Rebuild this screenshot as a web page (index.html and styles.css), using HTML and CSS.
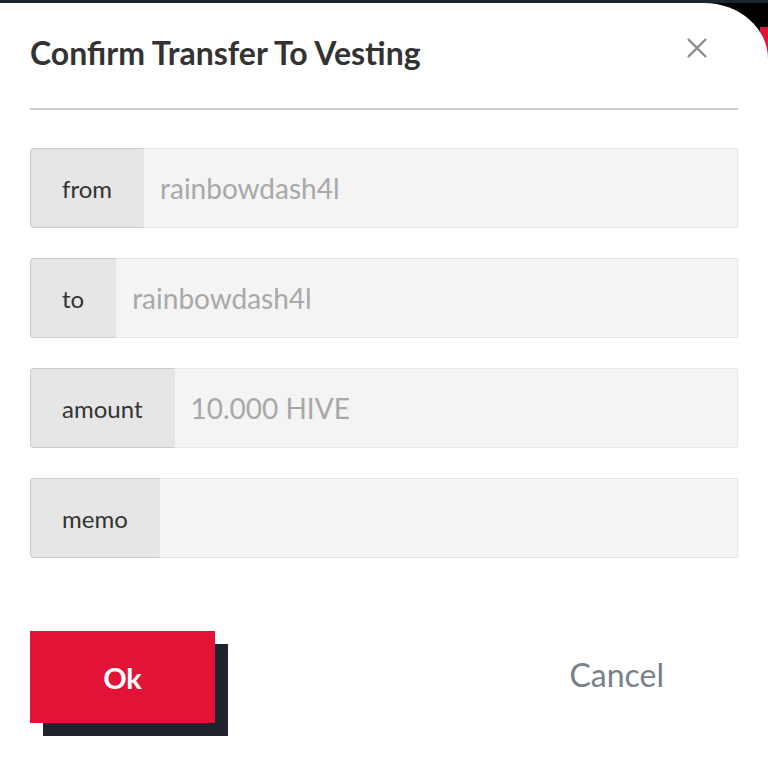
FILE: index.html
```html
<!DOCTYPE html>
<html>
<head>
<meta charset="utf-8">
<link rel="stylesheet" href="styles.css">
</head>
<body>
<div class="backdrop">
  <div class="corner-bg"><span class="red-sliver"></span></div>
  <div class="dialog">
    <div class="header">
      <h1 class="title">Confirm Transfer To Vesting</h1>
      <button class="close" aria-label="close">
        <svg width="22" height="22" viewBox="0 0 22 22"><path d="M2 2 L20 20 M20 2 L2 20" stroke="#8a8a8a" stroke-width="2.4" fill="none"/></svg>
      </button>
    </div>
    <hr class="rule">
    <div class="fields">
      <div class="group"><span class="addon">from</span><span class="value">rainbowdash4l</span></div>
      <div class="group"><span class="addon">to</span><span class="value">rainbowdash4l</span></div>
      <div class="group"><span class="addon">amount</span><span class="value">10.000 HIVE</span></div>
      <div class="group"><span class="addon">memo</span><span class="value"></span></div>
    </div>
    <div class="actions">
      <button class="ok">Ok</button>
      <button class="cancel">Cancel</button>
    </div>
  </div>
</div>
</body>
</html>
```
FILE: styles.css
```css
html, body {
  margin: 0;
  padding: 0;
  width: 768px;
  height: 767px;
  overflow: hidden;
  background: #1c2331;
}
.backdrop {
  position: relative;
  padding-top: 3px;
  height: 764px;
  font-family: "Lato", "Liberation Sans", sans-serif;
}
.corner-bg {
  position: absolute;
  right: 0;
  top: 3px;
  width: 80px;
  height: 80px;
  background: #000;
  overflow: hidden;
}
.red-sliver {
  position: absolute;
  right: 0;
  top: 24px;
  width: 8px;
  height: 30px;
  background: #e31337;
}
.dialog {
  position: relative;
  background: #fff;
  height: 764px;
  border-top-right-radius: 64px 56px;
  padding: 0 30px;
  box-sizing: border-box;
}
.header {
  display: flex;
  justify-content: space-between;
  align-items: center;
  height: 101px;
}
.title {
  margin: 0;
  font-size: 32px;
  font-weight: 700;
  color: #333;
  padding-bottom: 2px;
}
.close {
  border: none;
  background: none;
  padding: 0;
  margin-right: 30px;
  margin-bottom: 12px;
  display: flex;
}
.rule {
  margin: 4px 0 0 0;
  border: none;
  border-top: 2px solid #cfcfcf;
}
.fields {
  display: flex;
  flex-direction: column;
  gap: 30px;
  margin-top: 38px;
}
.group {
  display: flex;
  height: 80px;
}
.addon {
  display: flex;
  align-items: center;
  padding: 0 31px;
  background: #e6e6e6;
  border: 1px solid #cacaca;
  border-right: none;
  border-radius: 4px 0 0 4px;
  font-size: 24px;
  color: #333;
}
.value {
  flex: 1;
  display: flex;
  align-items: center;
  padding: 0 16px;
  background: #f4f4f4;
  border: 1px solid #e6e6e6;
  font-size: 28px;
  color: #a8a8a8;
}
.actions {
  display: flex;
  align-items: flex-start;
  margin-top: 73px;
}
.ok {
  width: 185px;
  height: 92px;
  background: #e31337;
  color: #fff;
  border: none;
  font-family: inherit;
  font-size: 29px;
  font-weight: 700;
  box-shadow: 13px 13px 0 #1f232b;
}
.cancel {
  border: none;
  background: none;
  font-family: inherit;
  font-size: 32px;
  color: #788187;
  margin-left: auto;
  margin-right: 74px;
  padding: 0;
  height: 86px;
}
```
